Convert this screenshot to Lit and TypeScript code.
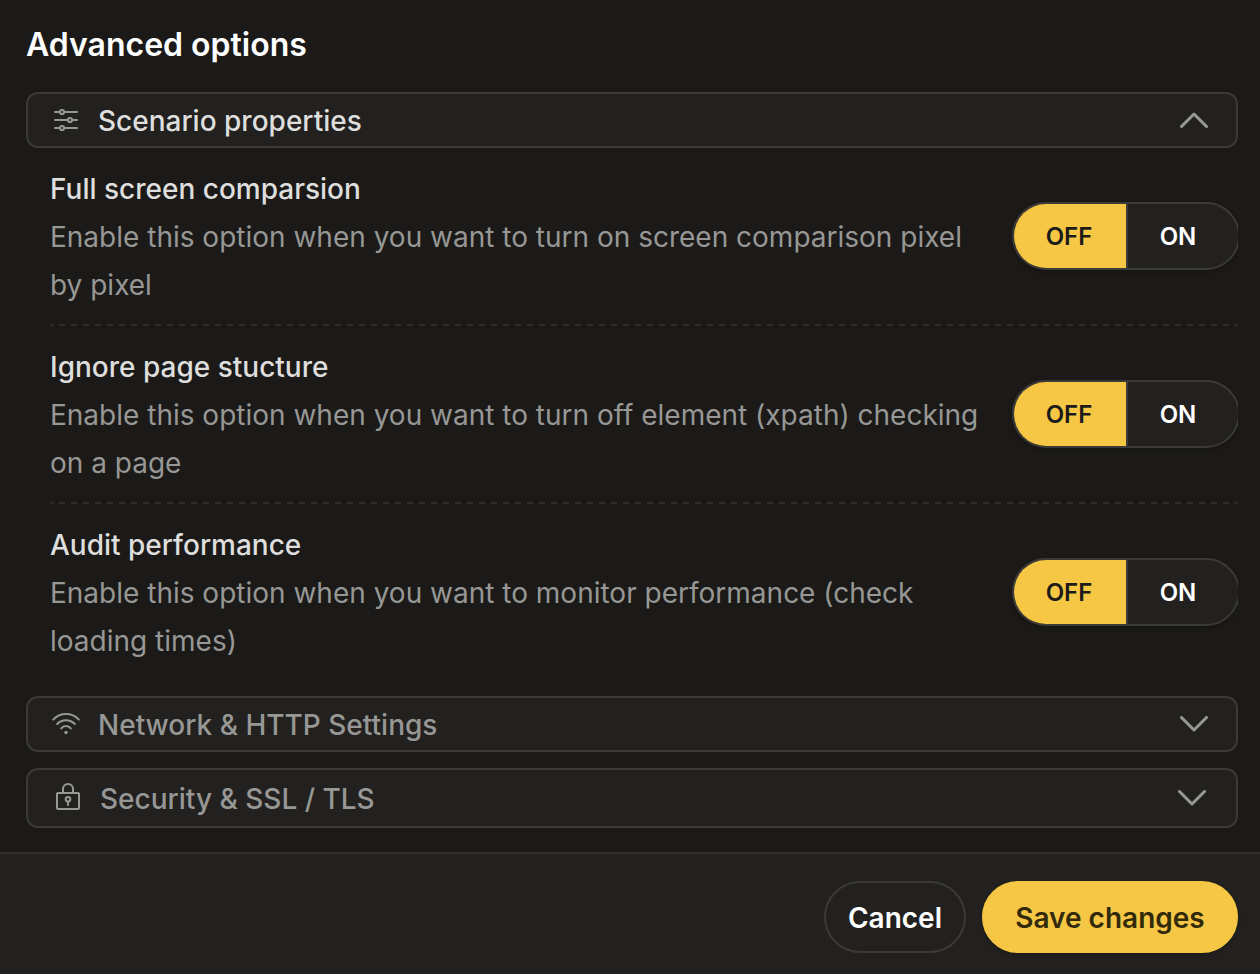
import { LitElement, html, css, svg, nothing } from "lit";
import { customElement, property, state } from "lit/decorators.js";
import { classMap } from "lit/directives/class-map.js";

const icons = {
  sliders: svg`
    <path d="M3 8H8M12 8H25M3 16H16M20 16H25M3 24H8M12 24H25" />
    <circle cx="10" cy="8" r="2.1" />
    <circle cx="18" cy="16" r="2.1" />
    <circle cx="10" cy="24" r="2.1" />`,
  wifi: svg`
    <path d="M1.2 11.6a17.4 17.4 0 0 1 25.600 0" />
    <path d="M5.2 16a12 12 0 0 1 17.600 0" />
    <path d="M9.2 20.400a6 6 0 0 1 9.600 0" />
    <circle class="dot" cx="14" cy="24.500" r="1.700" />`,
  lock: svg`
    <rect x="3" y="11" width="22" height="16" rx="1" />
    <path d="M9 11V7a5 5 0 0 1 10 0V11" />
    <circle cx="14" cy="17.300" r="2.300" />
    <path d="M14 19.700V23" />`,
};

type IconName = keyof typeof icons;

@customElement("section-header")
class SectionHeader extends LitElement {
  @property() label = "";
  @property() icon: IconName = "sliders";
  @property({ type: Boolean }) open = false;
  @property({ type: Boolean }) roomy = false;

  static styles = css`
    :host {
      display: block;
    }
    .header {
      box-sizing: border-box;
      display: flex;
      align-items: center;
      gap: 18px;
      width: 100%;
      height: 56px;
      margin: 0;
      padding: 0 28px 0 24px;
      border: 2px solid #3b3a38;
      border-radius: 12px;
      background: #22211f;
      color: #979795;
      font: 500 28px/40px Inter, sans-serif;
      text-align: left;
      cursor: pointer;
    }
    .header.open {
      color: #dededd;
    }
    .header.roomy {
      height: 60px;
      padding: 0 30px 0 26px;
    }
    .icon {
      flex: none;
      width: 28px;
      height: 32px;
      fill: none;
      stroke: #979795;
      stroke-width: 2;
      stroke-linecap: round;
      stroke-linejoin: round;
    }
    .dot {
      fill: #979795;
      stroke: none;
    }
    .label {
      flex: 1;
      padding-top: 2px;
    }
    .chevron {
      flex: none;
      width: 28px;
      height: 16px;
      fill: none;
      stroke: #979795;
      stroke-width: 3;
      stroke-linecap: round;
      stroke-linejoin: round;
    }
  `;

  render() {
    return html`<button
      type="button"
      class=${classMap({ header: true, open: this.open, roomy: this.roomy })}
      aria-expanded=${this.open ? "true" : "false"}
    >
      <svg class="icon" viewBox="0 0 28 32" aria-hidden="true">${icons[this.icon]}</svg>
      <span class="label">${this.label}</span>
      <svg class="chevron" viewBox="0 0 28 16" aria-hidden="true">
        <path d=${this.open ? "M1.500 14.500L14 2L26.500 14.500" : "M1.500 1.500L14 14L26.500 1.500"} />
      </svg>
    </button>`;
  }
}

@customElement("option-row")
class OptionRow extends LitElement {
  @property() name = "";
  @property() heading = "";
  @property() description = "";
  @state() private on = false;

  static styles = css`
    :host {
      display: block;
    }
    .row {
      display: flex;
      align-items: center;
      gap: 16px;
      padding: 15px 0;
    }
    .text {
      flex: 1;
      min-width: 0;
      padding-top: 2px;
      font-size: 28px;
      line-height: 48px;
    }
    .heading,
    .description {
      margin: 0;
      font-size: 28px;
    }
    .heading {
      color: #dededd;
      font-weight: 500;
    }
    .description {
      color: #979795;
      font-weight: 400;
    }
    .toggle {
      box-sizing: border-box;
      flex: none;
      display: grid;
      grid-template-columns: 112px 112px;
      height: 68px;
      margin-right: -2px;
      border: 2px solid #3b3a38;
      border-radius: 34px;
      background: #22211f;
      box-shadow: 0 2px 4px rgba(0, 0, 0, 0.2);
      overflow: hidden;
    }
    .choice {
      position: relative;
      display: grid;
      place-items: center;
      padding: 2px 2px 0 0;
      color: #ffffff;
      font-size: 24px;
      font-weight: 600;
      line-height: 32px;
      cursor: pointer;
    }
    .choice + .choice {
      border-left: 2px solid #3b3a38;
      padding-right: 10px;
    }
    .choice.selected {
      background: #f6c744;
      color: #1c1b19;
    }
    .radio {
      position: absolute;
      inset: 0;
      width: 100%;
      height: 100%;
      margin: 0;
      opacity: 0;
      cursor: pointer;
    }
  `;

  private choice(label: string, value: boolean) {
    const selected = this.on === value;
    return html`<label class=${classMap({ choice: true, selected })}>
      <input
        class="radio"
        type="radio"
        name=${this.name}
        .checked=${selected}
        @change=${() => (this.on = value)}
      />
      <span>${label}</span>
    </label>`;
  }

  render() {
    return html`<div class="row">
      <div class="text">
        <h3 class="heading" id="heading">${this.heading}</h3>
        <p class="description">${this.description}</p>
      </div>
      <div class="toggle" role="radiogroup" aria-labelledby="heading">
        ${this.choice("OFF", false)}${this.choice("ON", true)}
      </div>
    </div>`;
  }
}

const options = [
  {
    name: "fullscreen",
    heading: "Full screen comparsion",
    description: "Enable this option when you want to turn on screen comparison pixel by pixel",
  },
  {
    name: "structure",
    heading: "Ignore page stucture",
    description: "Enable this option when you want to turn off element (xpath) checking on a page",
  },
  {
    name: "performance",
    heading: "Audit performance",
    description: "Enable this option when you want to monitor performance (check loading times)",
  },
];

@customElement("app-root")
class AppRoot extends LitElement {
  @state() private open = true;

  static styles = css`
    :host {
      display: flex;
      flex-direction: column;
      min-height: 100vh;
      background: #1b1a18;
      font-family: Inter, sans-serif;
    }
    .content {
      flex: 1;
      display: flex;
      flex-direction: column;
      gap: 16px;
      padding: 21px 22px 24px 26px;
    }
    .title {
      margin: 0 0 7px;
      color: #ffffff;
      font-size: 32px;
      font-weight: 600;
      line-height: 48px;
    }
    .options {
      padding-left: 24px;
      overflow: hidden;
    }
    .dashes {
      display: block;
      width: 100%;
      height: 2px;
      stroke: #2e2d2b;
      stroke-width: 2;
      stroke-dasharray: 6 6;
      stroke-dashoffset: 3;
    }
    .footer {
      display: flex;
      justify-content: flex-end;
      gap: 16px;
      padding: 27px 22px 21px;
      border-top: 2px solid #302f2d;
      background: #22211f;
    }
    .button {
      box-sizing: border-box;
      min-width: 142px;
      height: 72px;
      margin: 0;
      border: 2px solid #3b3a38;
      border-radius: 36px;
      padding: 2px 20px 0;
      background: #22211f;
      color: #ffffff;
      font: 600 28px/40px Inter, sans-serif;
      cursor: pointer;
    }
    .button.primary {
      min-width: 256px;
      border-color: #f6c744;
      background: #f6c744;
      color: #332a0b;
      box-shadow: 0 2px 4px rgba(0, 0, 0, 0.2);
    }
  `;

  render() {
    return html`
      <main class="content">
        <h2 class="title">Advanced options</h2>
        <section>
          <section-header
            label="Scenario properties"
            icon="sliders"
            .open=${this.open}
            @click=${() => (this.open = !this.open)}
          ></section-header>
          ${this.open
            ? html`<div class="options">
                ${options.map(
                  (o, i) => html`${i > 0
                      ? html`<svg class="dashes" aria-hidden="true">
                          <line x1="0" y1="1" x2="100%" y2="1" />
                        </svg>`
                      : nothing}
                    <option-row
                      name=${o.name}
                      heading=${o.heading}
                      description=${o.description}
                    ></option-row>`
                )}
              </div>`
            : nothing}
        </section>
        <section-header label="Network &amp; HTTP Settings" icon="wifi"></section-header>
        <section-header label="Security &amp; SSL / TLS" icon="lock" roomy></section-header>
      </main>
      <footer class="footer">
        <button type="button" class="button">Cancel</button>
        <button type="button" class="button primary">Save changes</button>
      </footer>
    `;
  }
}
